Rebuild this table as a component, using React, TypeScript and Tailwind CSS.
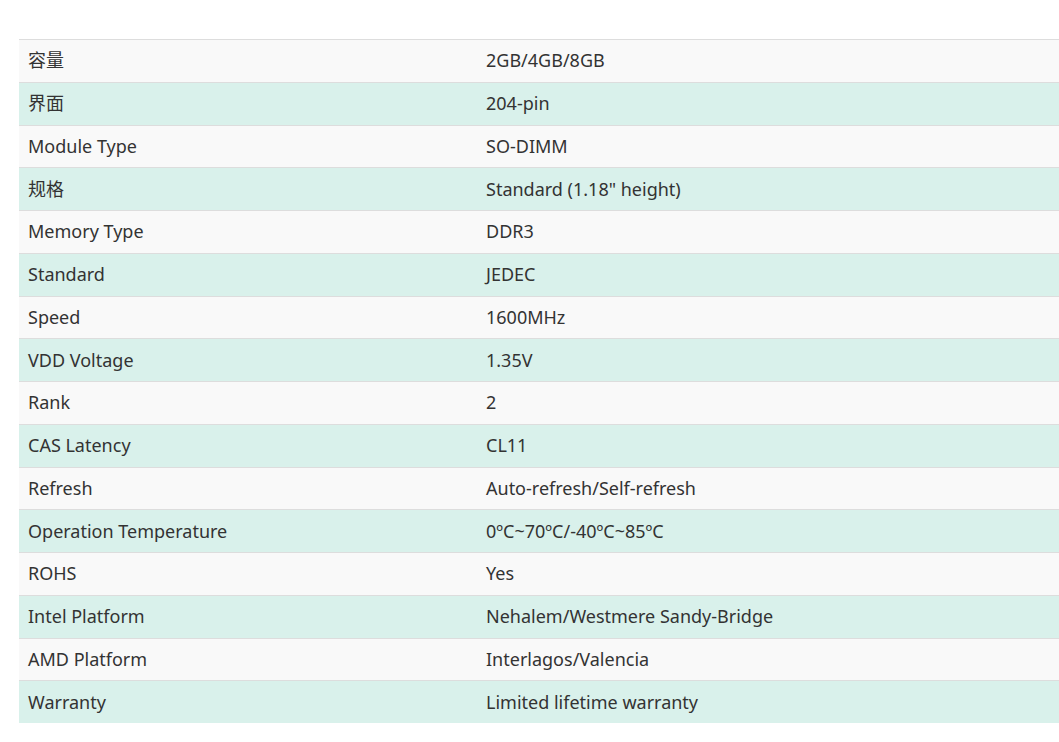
const rows: [string, string][] = [
  ["容量", "2GB/4GB/8GB"],
  ["界面", "204-pin"],
  ["Module Type", "SO-DIMM"],
  ["规格", 'Standard (1.18" height)'],
  ["Memory Type", "DDR3"],
  ["Standard", "JEDEC"],
  ["Speed", "1600MHz"],
  ["VDD Voltage", "1.35V"],
  ["Rank", "2"],
  ["CAS Latency", "CL11"],
  ["Refresh", "Auto-refresh/Self-refresh"],
  ["Operation Temperature", "0ºC~70ºC/-40ºC~85ºC"],
  ["ROHS", "Yes"],
  ["Intel Platform", "Nehalem/Westmere Sandy-Bridge"],
  ["AMD Platform", "Interlagos/Valencia"],
  ["Warranty", "Limited lifetime warranty"],
];

export default function App() {
  return (
    <div className="w-[1059px] h-[742px] overflow-hidden bg-white pt-[39px] pl-[19px]">
      <div
        className="w-[1060px] text-[18px] text-[#333]"
        style={{ fontFamily: '"Noto Sans", "Noto Sans CJK SC", sans-serif' }}
      >
        {rows.map(([k, v], i) => (
          <div
            key={i}
            className={`flex items-center h-[42.75px] border-t border-[#dddddd] ${
              i % 2 === 0 ? "bg-[#f9f9f9]" : "bg-[#d9f1eb]"
            }`}
          >
            <div className="w-[458px] pl-[9px]">{k}</div>
            <div className="pl-[9px]">{v}</div>
          </div>
        ))}
      </div>
    </div>
  );
}
